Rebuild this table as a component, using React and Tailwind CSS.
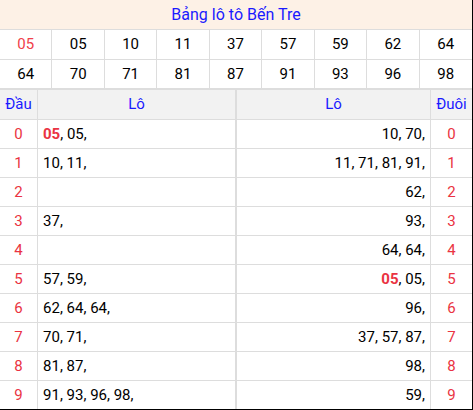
import React from "react";

const nums1 = ["05", "05", "10", "11", "37", "57", "59", "62", "64"];
const nums2 = ["64", "70", "71", "81", "87", "91", "93", "96", "98"];

const rows = [
  { d: "0", left: [["05", true], ["05"]], right: "10, 70," },
  { d: "1", left: [["10"], ["11"]], right: "11, 71, 81, 91," },
  { d: "2", left: [], right: "62," },
  { d: "3", left: [["37"]], right: "93," },
  { d: "4", left: [], right: "64, 64," },
  { d: "5", left: [["57"], ["59"]], right: null },
  { d: "6", left: [["62"], ["64"], ["64"]], right: "96," },
  { d: "7", left: [["70"], ["71"]], right: "37, 57, 87," },
  { d: "8", left: [["81"], ["87"]], right: "98," },
  { d: "9", left: [["91"], ["93"], ["96"], ["98"]], right: "59," },
];

export default function App() {
  return (
    <div className="w-[473px] h-[410px] bg-black" style={{ fontFamily: "Roboto, 'Liberation Sans', sans-serif" }}>
      <div className="w-[472px] h-[409px] bg-white overflow-hidden">
        <div className="h-[30px] bg-[#fdf1e6] border-b border-[#dddddd] flex items-center justify-center text-[16px] text-[#1a1aff]">
          Bảng lô tô Bến Tre
        </div>
        <div className="grid grid-cols-9">
          {nums1.map((n, i) => (
            <div
              key={"a" + i}
              className={`h-[30px] flex items-center justify-center text-[15px] border-b border-[#dddddd] ${i < 8 ? "border-r" : ""} ${i === 0 ? "text-[#f0404a]" : "text-black"}`}
            >
              {n}
            </div>
          ))}
          {nums2.map((n, i) => (
            <div
              key={"b" + i}
              className={`h-[30px] flex items-center justify-center text-[15px] text-black border-b-2 border-[#dddddd] ${i < 8 ? "border-r" : ""}`}
            >
              {n}
            </div>
          ))}
        </div>
        <div className="grid grid-cols-[38px_199px_194px_41px]">
          <div className="h-[30px] bg-[#f2f2f2] border-r border-b border-[#dddddd] flex items-center justify-center text-[15px] text-[#1a1aff]">Đầu</div>
          <div className="h-[30px] bg-[#f2f2f2] border-r-2 border-b border-[#dddddd] flex items-center justify-center text-[15px] text-[#1a1aff]">Lô</div>
          <div className="h-[30px] bg-[#f2f2f2] border-r border-b border-[#dddddd] flex items-center justify-center text-[15px] text-[#1a1aff]">Lô</div>
          <div className="h-[30px] bg-[#f2f2f2] border-b border-[#dddddd] flex items-center justify-center text-[15px] text-[#1a1aff]">Đuôi</div>
          {rows.map((r) => (
            <React.Fragment key={r.d}>
              <div className="h-[29px] border-r border-b border-[#dddddd] flex items-center justify-center text-[15px] text-[#ea3342]">{r.d}</div>
              <div className="h-[29px] border-r-2 border-b border-[#dddddd] flex items-center pl-[5px] text-[15px] text-black">
                {r.left.map(([v, b], i) => (
                  <React.Fragment key={i}>
                    {i > 0 ? " " : ""}
                    {b ? <span className="font-bold text-[#ea3342]">{v}</span> : v}
                    ,
                  </React.Fragment>
                ))}
              </div>
              <div className="h-[29px] border-r border-b border-[#dddddd] flex items-center justify-end pr-[5px] text-[15px] text-black whitespace-pre">
                {r.right === null ? (
                  <>
                    <span className="font-bold text-[#ea3342]">05</span>, 05,
                  </>
                ) : (
                  r.right
                )}
              </div>
              <div className="h-[29px] border-b border-[#dddddd] flex items-center justify-center text-[15px] text-[#ea3342]">{r.d}</div>
            </React.Fragment>
          ))}
        </div>
      </div>
    </div>
  );
}
